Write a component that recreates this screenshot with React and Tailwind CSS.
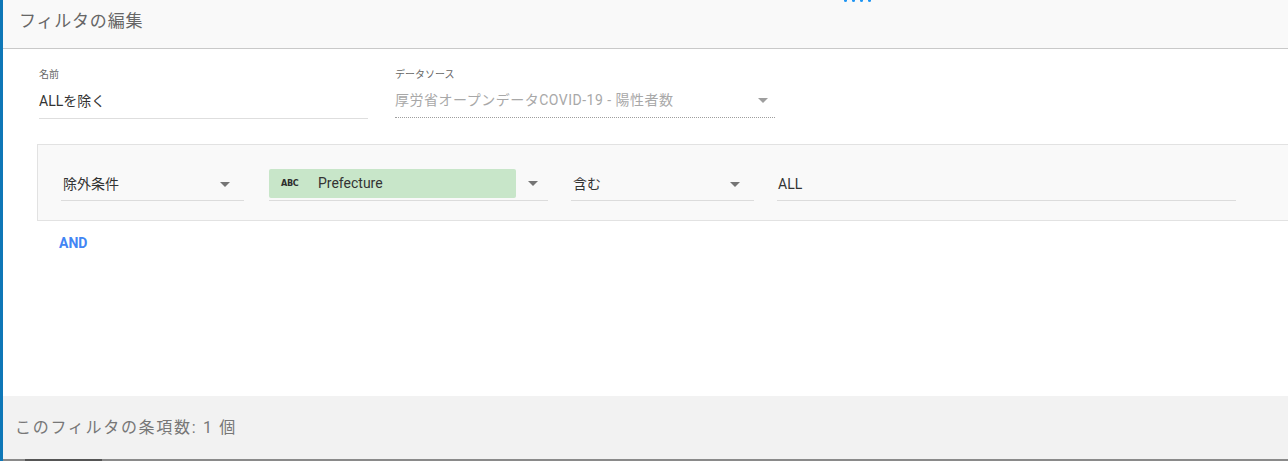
import React from 'react';

const font = { fontFamily: "Roboto, 'Noto Sans CJK JP', sans-serif" };

function Caret({ light = false }) {
  return (
    <svg width="10" height="5" viewBox="0 0 10 5" className="shrink-0">
      <path d="M0 0 L10 0 L5 5 Z" fill={light ? '#9e9e9e' : '#757575'} />
    </svg>
  );
}

function Select({ label, width, caretGap = 'pr-[14px]' }) {
  return (
    <div className={`flex items-center justify-between h-[32px] border-b border-[#dcdcdc] ${width} ${caretGap} pl-[2px]`}>
      <span className="text-[14px] text-[#333]">{label}</span>
      <Caret />
    </div>
  );
}

export default function App() {
  return (
    <div className="w-[1288px] h-[461px] flex bg-white overflow-hidden" style={font}>
      <div className="w-[3px] shrink-0 bg-[#0e77b7]" />
      <div className="flex-1 flex flex-col min-w-0">
        {/* header */}
        <div className="relative h-[49px] shrink-0 bg-[#f9f9f9] border-b border-[#c9c9c9] pl-[16px] flex items-center">
          <span className="text-[17px] text-[#666] -mt-[4px] tracking-[0.8px]">フィルタの編集</span>
          <div className="absolute left-[841px] -top-[1px] flex gap-[5px]">
            <span className="w-[3px] h-[3px] rounded-full bg-[#2196f3]" />
            <span className="w-[3px] h-[3px] rounded-full bg-[#2196f3]" />
            <span className="w-[3px] h-[3px] rounded-full bg-[#2196f3]" />
            <span className="w-[3px] h-[3px] rounded-full bg-[#2196f3]" />
          </div>
        </div>

        {/* body */}
        <div className="flex-1 flex flex-col">
          <div className="flex pl-[36px] pt-[20px] gap-[27px]">
            <div className="w-[329px]">
              <div className="text-[10px] text-[#666] leading-[12px]">名前</div>
              <div className="h-[38px] flex items-center border-b border-[#dedede] pt-[3px]">
                <span className="text-[14px] text-[#333]">ALLを除く</span>
              </div>
            </div>
            <div className="w-[380px]">
              <div className="text-[10px] text-[#666] leading-[12px]">データソース</div>
              <div className="h-[37px] flex items-center justify-between border-b border-dotted border-[#9e9e9e] pt-[3px] pr-[7px]">
                <span className="text-[14px] text-[#a8a8a8] tracking-[0.5px]">厚労省オープンデータCOVID-19 - 陽性者数</span>
                <Caret light />
              </div>
            </div>
          </div>

          {/* condition box */}
          <div className="ml-[34px] mt-[25px] h-[77px] bg-[#f9f9f9] border border-r-0 border-[#e2e2e2] flex items-center pt-[5px] pl-[23px]">
            <Select label="除外条件" width="w-[183px]" />
            <div className="ml-[25px] w-[279px] h-[32px] border-b border-[#dcdcdc] flex items-start pr-[10px] justify-between">
              <div className="w-[247px] h-[29px] bg-[#c8e6c9] rounded-[2px] flex items-center pl-[12px]">
                <span className="text-[9px] font-bold text-[#2e2e2e] w-[37px] tracking-[-0.3px]" style={{ fontFamily: "'DejaVu Sans Condensed', 'DejaVu Sans', sans-serif" }}>ABC</span>
                <span className="text-[14px] text-[#333]">Prefecture</span>
              </div>
              <div className="mt-[12px]"><Caret /></div>
            </div>
            <div className="ml-[23px]">
              <Select label="含む" width="w-[183px]" />
            </div>
            <div className="ml-[23px] w-[459px] h-[32px] border-b border-[#dcdcdc] flex items-center pl-[1px]">
              <span className="text-[14px] text-[#333]">ALL</span>
            </div>
          </div>

          <div className="pl-[56px] pt-[12px] text-[14px] font-bold text-[#4285f4]">AND</div>
        </div>

        {/* footer */}
        <div className="h-[63px] shrink-0 bg-[#f2f2f2] flex items-center pl-[12px]">
          <span className="text-[16px] text-[#777] tracking-[1.7px]">このフィルタの条項数: 1 個</span>
        </div>
        <div className="h-[2px] shrink-0 bg-[#8a8a8a] flex">
          <div className="ml-[22px] w-[77px] bg-[#555]" />
        </div>
      </div>
    </div>
  );
}
